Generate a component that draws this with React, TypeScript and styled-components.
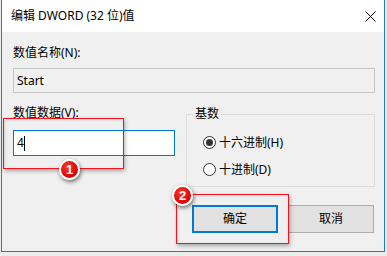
import React from "react";
import styled, { createGlobalStyle } from "styled-components";

const Global = createGlobalStyle`
  html, body { margin: 0; padding: 0; background: #ececec; }
  body { font-family: "Noto Sans", "Noto Sans CJK SC", sans-serif; font-size: 12px; color: #000; }
  #root { width: 387px; height: 256px; overflow: hidden; }
`;

const Dialog = styled.div`
  position: relative;
  margin-left: 1px;
  width: 384px;
  box-sizing: border-box;
  border: 1px solid #1a7fd4;
  border-top: 0;
  background: #f0f0f0;
`;

const TitleBar = styled.div`
  height: 32px;
  background: #fff;
  display: flex;
  align-items: center;
  padding-left: 9px;
`;

const Title = styled.div`
  flex: 1;
  font-size: 12px;
  line-height: 16px;
  color: #000;
`;

const CloseBtn = styled.div`
  width: 28px;
  height: 32px;
  display: flex;
  align-items: center;
  justify-content: center;
`;

const Body = styled.div`
  padding: 13px 9px 18px 11px;
  display: flex;
  flex-direction: column;
`;

const Label = styled.div<{ $mt?: number }>`
  line-height: 16px;
  height: 16px;
  margin-top: ${(p) => p.$mt ?? 0}px;
`;

const TextBox = styled.div<{ $active?: boolean; $h: number; $mt: number }>`
  box-sizing: border-box;
  height: ${(p) => p.$h}px;
  margin-top: ${(p) => p.$mt}px;
  border: 1px solid ${(p) => (p.$active ? "#0078d7" : "#c6c6c6")};
  background: ${(p) => (p.$active ? "#fff" : "#f0f0f0")};
  padding-left: 3px;
  display: flex;
  align-items: center;
  line-height: 16px;
`;

const Caret = styled.span`
  display: inline-block;
  width: 1px;
  height: 15px;
  background: #000;
  margin-left: 0px;
`;

const Grid = styled.div`
  display: grid;
  grid-template-columns: 162px 189px;
  column-gap: 11px;
  margin-top: 12px;
`;

const Col = styled.div`
  display: flex;
  flex-direction: column;
`;

const Group = styled.fieldset`
  margin: 0;
  padding: 9px 0 7px 0;
  border: 1px solid #dcdcdc;
  min-width: 0;
  display: flex;
  flex-direction: column;
  gap: 7px;
`;

const Legend = styled.legend`
  margin-left: 6px;
  padding: 0 2px;
  line-height: 18px;
  height: 18px;
`;

const RadioRow = styled.div`
  height: 20px;
  display: flex;
  align-items: center;
  padding-left: 16px;
  gap: 3px;
`;

const RadioCircle = styled.span<{ $on?: boolean }>`
  box-sizing: border-box;
  width: 13px;
  height: 13px;
  border-radius: 50%;
  border: 1px solid #333;
  background: #fff;
  display: flex;
  align-items: center;
  justify-content: center;
  &::after {
    content: "";
    display: ${(p) => (p.$on ? "block" : "none")};
    width: 7px;
    height: 7px;
    border-radius: 50%;
    background: #333;
  }
`;

const ButtonRow = styled.div`
  display: flex;
  justify-content: flex-end;
  gap: 10px;
  margin-top: 18px;
  padding-right: 1px;
`;

const Button = styled.div<{ $default?: boolean }>`
  box-sizing: border-box;
  width: 86px;
  height: 28px;
  display: flex;
  align-items: center;
  justify-content: center;
  background: #e1e1e1;
  border: ${(p) => (p.$default ? "2px solid #0078d7" : "1px solid #adadad")};
  line-height: 16px;
`;

const Highlight = styled.div<{ $x: number; $y: number; $w: number; $h: number }>`
  position: absolute;
  left: ${(p) => p.$x}px;
  top: ${(p) => p.$y}px;
  width: ${(p) => p.$w}px;
  height: ${(p) => p.$h}px;
  box-sizing: border-box;
  border: 1.5px solid #f0141e;
  box-shadow: 1px 2px 4px rgba(0, 0, 0, 0.3), inset 1px 1px 3px rgba(0, 0, 0, 0.12);
  pointer-events: none;
`;

const Badge = styled.div<{ $x: number; $y: number }>`
  position: absolute;
  left: ${(p) => p.$x}px;
  top: ${(p) => p.$y}px;
  width: 21px;
  height: 21px;
  box-sizing: border-box;
  border-radius: 50%;
  border: 2px solid #fff;
  background: radial-gradient(circle at 40% 35%, #ff3a2a, #d90000 70%);
  box-shadow: 1px 2px 4px rgba(0, 0, 0, 0.55);
  color: #fff;
  font-family: "Liberation Sans", Arial, sans-serif;
  font-weight: bold;
  font-size: 13px;
  line-height: 17px;
  text-align: center;
`;

export default function App() {
  return (
    <>
      <Global />
      <Dialog>
        <TitleBar>
          <Title>编辑 DWORD (32 位)值</Title>
          <CloseBtn>
            <svg width="11" height="11" viewBox="0 0 11 11">
              <path d="M0.5 0.5 L10.5 10.5 M10.5 0.5 L0.5 10.5" stroke="#000" strokeWidth="1" fill="none" />
            </svg>
          </CloseBtn>
        </TitleBar>
        <Body>
          <Label>数值名称(N):</Label>
          <TextBox $h={25} $mt={7}>Start</TextBox>
          <Grid>
            <Col>
              <Label>数值数据(V):</Label>
              <TextBox $active $h={26} $mt={9}>
                4<Caret />
              </TextBox>
            </Col>
            <Group>
              <Legend>基数</Legend>
              <RadioRow>
                <RadioCircle $on />
                <span>十六进制(H)</span>
              </RadioRow>
              <RadioRow>
                <RadioCircle />
                <span>十进制(D)</span>
              </RadioRow>
            </Group>
          </Grid>
          <ButtonRow>
            <Button $default>确定</Button>
            <Button>取消</Button>
          </ButtonRow>
        </Body>
        <Highlight $x={1} $y={118} $w={121} $h={51} />
        <Highlight $x={174} $y={194} $w={113} $h={50} />
        <Badge $x={57} $y={159}>1</Badge>
        <Badge $x={170} $y={185}>2</Badge>
      </Dialog>
    </>
  );
}
